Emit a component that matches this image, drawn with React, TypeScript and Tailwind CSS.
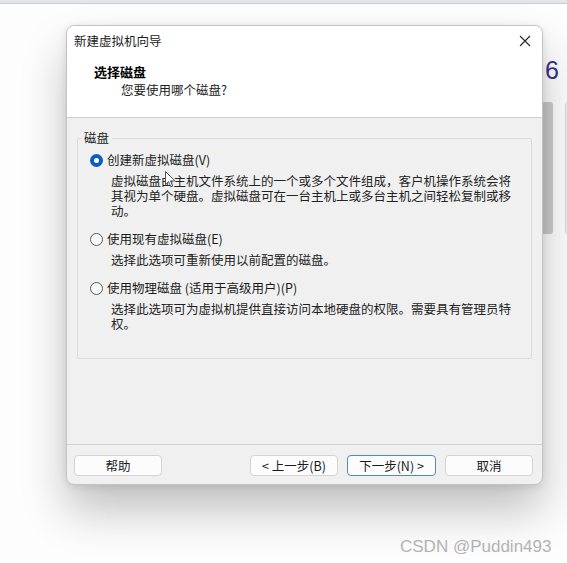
import React from 'react';

const cjk = "font-['Noto_Sans_CJK_SC','Noto_Sans',sans-serif]";

function Radio({ checked }: { checked?: boolean }) {
  if (checked) {
    return (
      <span className="flex h-[13px] w-[13px] shrink-0 items-center justify-center rounded-full bg-[#0b5fbe]">
        <span className="h-[5px] w-[5px] rounded-full bg-white" />
      </span>
    );
  }
  return <span className="h-[13px] w-[13px] shrink-0 rounded-full border border-[#5c5c5c] bg-[#f8f8f8]" />;
}

function Option({ checked, label, lines }: { checked?: boolean; label: string; lines: string[] }) {
  return (
    <div>
      <div className="flex h-[16px] items-center gap-[4px]">
        <Radio checked={checked} />
        <span className="leading-[16px]">{label}</span>
      </div>
      <p className="mt-[5px] pl-[21px] leading-[15px] whitespace-nowrap text-[#222]">
        {lines.map((l, i) => (
          <React.Fragment key={l}>
            {i > 0 && <br />}
            {l}
          </React.Fragment>
        ))}
      </p>
    </div>
  );
}

function Btn({ children, primary }: { children: React.ReactNode; primary?: boolean }) {
  return (
    <button
      className={
        primary
          ? 'h-[21px] w-[89px] rounded-[4px] border border-[#4b8dbf] bg-[#fcfcfc] text-[12.5px] leading-[19px] text-[#1a1a1a]'
          : 'h-[21px] w-[88px] rounded-[4px] border border-[#d3d3d3] bg-[#fcfcfc] text-[12.5px] leading-[19px] text-[#1a1a1a]'
      }
    >
      {children}
    </button>
  );
}

export default function App() {
  return (
    <div className={`relative h-[563px] w-full overflow-hidden bg-[#fdfdfd] ${cjk} text-[12.5px] text-[#1b1b1b]`}>
      {/* desktop behind the dialog */}
      <div className="h-[3px] bg-[#e5e5e5]" />
      <div className="h-[1px] bg-[#b7d2db]" />
      <span className="absolute left-[545px] top-[57px] font-['Liberation_Sans',sans-serif] text-[25px] leading-[26px] text-[#34348a]">
        6
      </span>
      <div className="absolute left-[528px] top-[102px] h-[132px] w-[25px] rounded-[3px] bg-[#cbcbcb]" />
      <div className="absolute left-[565px] top-[102px] h-[132px] w-[8px] rounded-[3px] border border-[#d6d6d6] bg-[#f1f1f1]" />

      {/* wizard dialog */}
      <div className="relative ml-[66px] mt-[21px] w-[477px] overflow-hidden rounded-[8px] border border-[#c4c4c4] bg-[#f0f0f0] shadow-[0_26px_46px_rgba(0,0,0,0.24),0_2px_8px_rgba(0,0,0,0.1)]">
        <div className="border-b border-[#cfcfcf] bg-white">
          <div className="flex h-[30px] items-center justify-between pl-[7px] pr-[11px]">
            <span className="leading-[16px]">新建虚拟机向导</span>
            <svg width="12" height="12" viewBox="0 0 12 12">
              <path d="M1 1 L11 11 M11 1 L1 11" stroke="#2a2a2a" strokeWidth="1.2" />
            </svg>
          </div>
          <div className="mt-[8px] pl-[27px] text-[13px] font-bold leading-[16px] text-black">选择磁盘</div>
          <div className="mt-[2px] pb-[19px] pl-[54px] leading-[16px] text-[#222]">您要使用哪个磁盘?</div>
        </div>

        <div className="h-[327px] border-b border-[#cfcfcf] pt-[12px]">
          <fieldset className="mx-[10px] h-[229px] rounded-[2px] border border-[#dadada] pl-[12px] pt-[6px]">
            <legend className="-ml-[9px] px-[3px] leading-[16px]">磁盘</legend>
            <div className="flex flex-col gap-[13px]">
              <Option
                checked
                label="创建新虚拟磁盘(V)"
                lines={[
                  '虚拟磁盘由主机文件系统上的一个或多个文件组成，客户机操作系统会将',
                  '其视为单个硬盘。虚拟磁盘可在一台主机上或多台主机之间轻松复制或移',
                  '动。',
                ]}
              />
              <Option label="使用现有虚拟磁盘(E)" lines={['选择此选项可重新使用以前配置的磁盘。']} />
              <Option
                label="使用物理磁盘 (适用于高级用户)(P)"
                lines={['选择此选项可为虚拟机提供直接访问本地硬盘的权限。需要具有管理员特', '权。']}
              />
            </div>
          </fieldset>
        </div>

        <div className="flex items-center pb-[8px] pl-[7px] pr-[9px] pt-[10px]">
          <Btn>帮助</Btn>
          <div className="ml-auto flex gap-[9px]">
            <Btn>&lt; 上一步(B)</Btn>
            <Btn primary>下一步(N) &gt;</Btn>
            <Btn>取消</Btn>
          </div>
        </div>
      </div>

      {/* mouse pointer over the first description */}
      <svg className="absolute left-[165px] top-[171px]" width="11" height="17" viewBox="0 0 11 17">
        <path d="M0.5 0.5 L0.5 13.5 L3.6 10.6 L5.8 15.8 L7.7 15 L5.6 9.9 L10 9.9 Z" fill="#fff" stroke="#555" strokeWidth="1" strokeLinejoin="round" />
      </svg>

      <span className="absolute left-[400px] top-[537px] font-['Liberation_Sans',sans-serif] text-[17px] leading-[20px] text-[#b3b3b3]">
        CSDN @Puddin493
      </span>
    </div>
  );
}
